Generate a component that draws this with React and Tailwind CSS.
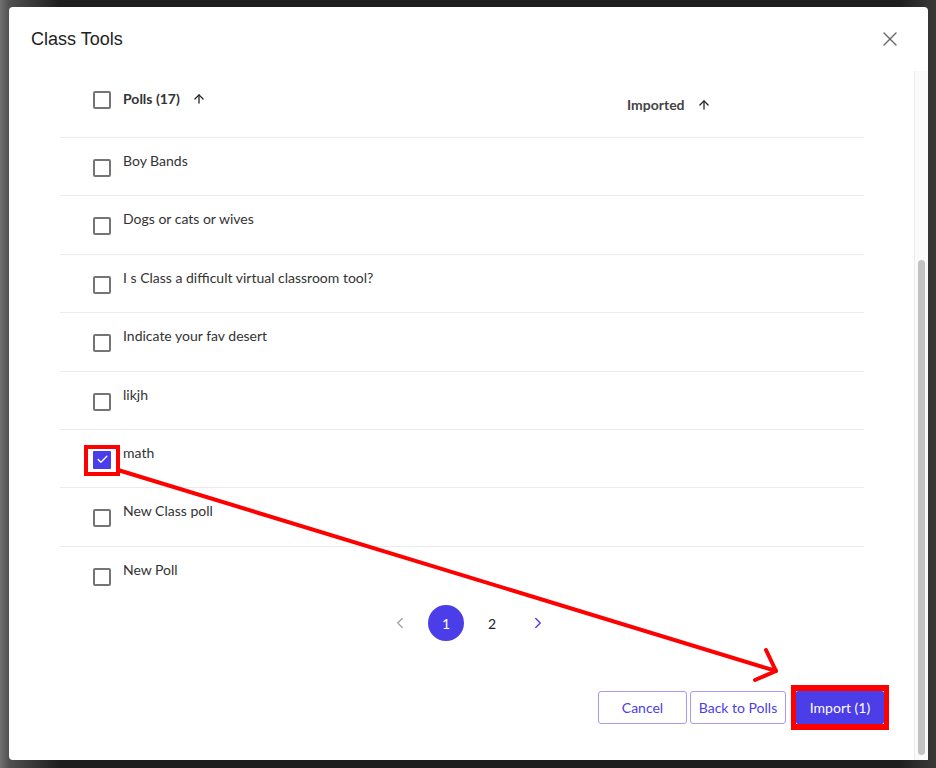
import { X, ArrowUp, ChevronLeft, ChevronRight, Check } from "lucide-react";

const polls = [
  { id: 1, name: "Boy Bands" },
  { id: 2, name: "Dogs or cats or wives" },
  { id: 3, name: "I s Class a difficult virtual classroom tool?" },
  { id: 4, name: "Indicate your fav desert" },
  { id: 5, name: "likjh" },
  { id: 6, name: "math", checked: true },
  { id: 7, name: "New Class poll" },
  { id: 8, name: "New Poll" },
];

function Box({ checked }) {
  if (checked) {
    return (
      <div className="w-[18px] h-[18px] bg-[#4b3de8] flex items-center justify-center rounded-[1px]">
        <Check size={13} color="#fff" strokeWidth={2.5} />
      </div>
    );
  }
  return <div className="w-[18px] h-[18px] border-2 border-[#757575] rounded-[2px] bg-white" />;
}

function App() {
  return (
    <div className="relative h-[768px] w-[936px] overflow-hidden bg-[linear-gradient(to_right,#707070_0px,#505050_9px,#1e1e1e_60px,#1e1e1e_96%,#3a3a3a_100%)] pt-[7px] pl-[9px]">
      <div className="w-[919px] h-[753px] bg-white rounded-[4px] flex flex-col font-['Lato','Liberation_Sans',sans-serif] text-[#333]">

        {/* HEADER */}
        <div className="h-[64px] shrink-0 flex items-center justify-between pl-[22px] pr-[26px]">
          <h2 className="font-['Liberation_Sans',Arial,sans-serif] text-[18px] text-[#222]">Class Tools</h2>
          <X size={24} strokeWidth={1.4} color="#666" />
        </div>

        {/* BODY */}
        <div className="flex flex-1 min-h-0">
          <div className="flex-1 flex flex-col">
            <div className="ml-[51px] w-[804px]">

              {/* TABLE HEAD */}
              <div className="h-[67px] flex border-b border-[#ebebeb]">
                <div className="w-[63px] pl-[33px] pt-[20px]">
                  <Box />
                </div>
                <div className="w-[504px] pt-[16px] flex items-start gap-[12px]">
                  <span className="text-[14px] font-bold leading-[24px]">Polls (17)</span>
                  <ArrowUp size={14} strokeWidth={2.2} className="mt-[5px]" color="#222" />
                </div>
                <div className="pt-[22px] flex items-start gap-[12px]">
                  <span className="text-[14px] font-bold leading-[24px] text-[#444]">Imported</span>
                  <ArrowUp size={14} strokeWidth={2.2} className="mt-[5px]" color="#222" />
                </div>
              </div>

              {/* ROWS */}
              {polls.map((p, i) => (
                <div
                  key={p.id}
                  className={`h-[58.4px] flex items-start ${i < polls.length - 1 ? "border-b border-[#ebebeb]" : ""}`}
                >
                  <div className="w-[63px] pl-[33px] pt-[21px]">
                    <Box checked={p.checked} />
                  </div>
                  <span className="pt-[13px] text-[14px] leading-[20px] text-[#333]">{p.name}</span>
                </div>
              ))}

              {/* PAGINATION */}
              <div className="flex items-center justify-center gap-[10px] h-[36px] pl-[14px]">
                <div className="w-[36px] flex justify-center">
                  <ChevronLeft size={18} color="#a0a4ad" strokeWidth={1.8} />
                </div>
                <div className="w-[36px] h-[36px] rounded-full bg-[#4b3de8] text-white text-[14px] flex items-center justify-center">1</div>
                <div className="w-[36px] text-center text-[14px] text-[#222]">2</div>
                <div className="w-[36px] flex justify-center">
                  <ChevronRight size={18} color="#4b3de8" strokeWidth={1.8} />
                </div>
              </div>
            </div>

            {/* FOOTER */}
            <div className="flex justify-end items-center mt-[44px] pr-[25px]">
              <button className="w-[89px] h-[33px] border border-[#a49cf4] rounded-[3px] text-[14px] text-[#4b3de8]">Cancel</button>
              <button className="ml-[3px] w-[96px] h-[33px] border border-[#a49cf4] rounded-[3px] text-[14px] text-[#4b3de8]">Back to Polls</button>
              <div className="ml-[5px] border-x-[5px] border-y-[6px] border-[#ff0000]">
                <button className="w-[88px] h-[33px] bg-[#4b3de8] rounded-[2px] text-[14px] text-white">Import (1)</button>
              </div>
            </div>
          </div>

          {/* SCROLLBAR */}
          <div className="w-[14px] bg-[#fafafa] border-l border-[#ededed] flex flex-col pt-[189px] pb-[5px] items-center">
            <div className="w-[7px] flex-1 bg-[#c2c2c2] rounded-full" />
          </div>
        </div>
      </div>

      {/* ANNOTATIONS */}
      <div className="absolute left-[84px] top-[445px] w-[36px] h-[31px] border-[4px] border-[#ff0000]" />
      <svg className="absolute left-0 top-0" width="936" height="768">
        <line x1="118" y1="470" x2="776" y2="671" stroke="#ff0000" strokeWidth="4" strokeLinecap="round" />
        <polyline points="766,650 776,671 755,680" fill="none" stroke="#ff0000" strokeWidth="4" strokeLinecap="round" strokeLinejoin="round" />
      </svg>
    </div>
  );
}

export default App;
